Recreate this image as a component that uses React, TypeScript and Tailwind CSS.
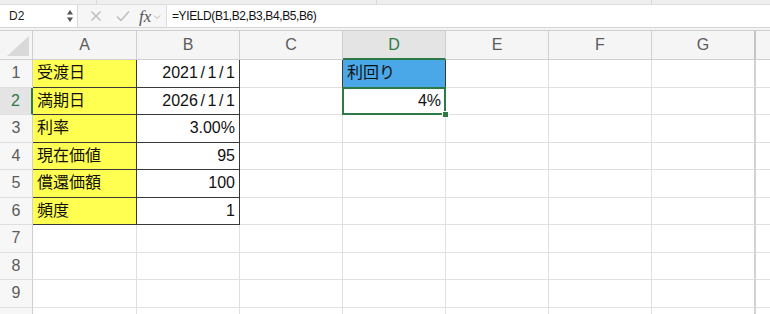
import React from "react";

const COLS = ["A", "B", "C", "D", "E", "F", "G", ""];
const WIDTHS = ["w-[104px]", "w-[103px]", "w-[103px]", "w-[103px]", "w-[103px]", "w-[103px]", "w-[104px]", "w-[40px]"];

type CellDef = { text?: React.ReactNode; cls?: string; align?: "left" | "right"; selected?: boolean };

const slash = <span className="mx-[2.6px]">/</span>;
const DARK = "border-r-[#3a3a3a] border-b-[#3a3a3a]";

const DATA: Record<number, Record<number, CellDef>> = {
  1: {
    0: { text: "受渡日", cls: `bg-[#ffff52] ${DARK}` },
    1: { text: <>2021{slash}1{slash}1</>, align: "right", cls: DARK },
    2: { cls: "border-r-[#3a3a3a] border-b-[#e0e0e0]" },
    3: { text: "利回り", cls: `bg-[#4aa7e8] ${DARK}` },
  },
  2: {
    0: { text: "満期日", cls: `bg-[#ffff52] ${DARK}` },
    1: { text: <>2026{slash}1{slash}1</>, align: "right", cls: DARK },
    3: { text: "4%", align: "right", selected: true },
  },
  3: {
    0: { text: "利率", cls: `bg-[#ffff52] ${DARK}` },
    1: { text: "3.00%", align: "right", cls: DARK },
  },
  4: {
    0: { text: "現在価値", cls: `bg-[#ffff52] ${DARK}` },
    1: { text: "95", align: "right", cls: DARK },
  },
  5: {
    0: { text: "償還価額", cls: `bg-[#ffff52] ${DARK}` },
    1: { text: "100", align: "right", cls: DARK },
  },
  6: {
    0: { text: "頻度", cls: `bg-[#ffff52] ${DARK}` },
    1: { text: "1", align: "right", cls: DARK },
  },
};

function FormulaBar() {
  return (
    <div className="flex h-[23px] bg-[#f6f6f6] border-b border-[#d6d6d6]">
      <div className="flex w-[78px] items-center justify-between bg-white border-r border-[#d9d9d9] pl-[9px] pr-[3px]">
        <span className="text-[12px] text-[#222]">D2</span>
        <svg width="8" height="16" viewBox="0 0 8 16">
          <polygon points="4,2 7,6.5 1,6.5" fill="#555" />
          <polygon points="1,9.5 7,9.5 4,14" fill="#555" />
        </svg>
      </div>
      <div className="flex w-[88px] items-center">
        <svg className="ml-[12px]" width="12" height="12" viewBox="0 0 12 12">
          <path d="M1.5 1.5 L10.5 10.5 M10.5 1.5 L1.5 10.5" stroke="#b9b9b9" strokeWidth="1.3" fill="none" />
        </svg>
        <svg className="ml-[14px]" width="14" height="12" viewBox="0 0 14 12">
          <path d="M1 6.5 L5 10.5 L13 1.5" stroke="#b9b9b9" strokeWidth="1.3" fill="none" />
        </svg>
        <span className="ml-[9px] font-['Liberation_Serif',serif] italic text-[17px] text-[#555] leading-none">fx</span>
        <svg className="ml-[2px] mt-[2px]" width="8" height="6" viewBox="0 0 8 6">
          <path d="M1 1.5 L4 4.5 L7 1.5" stroke="#b5b5b5" strokeWidth="1" fill="none" />
        </svg>
      </div>
      <div className="flex flex-1 items-center bg-white border-l border-[#dcdcdc] pl-[5px]">
        <span className="text-[12px] tracking-[-0.4px] text-[#111]">=YIELD(B1,B2,B3,B4,B5,B6)</span>
      </div>
    </div>
  );
}

function HeaderRow() {
  return (
    <div className="flex h-[30px] border-t border-[#cdcdcd]">
      <div className="relative w-[33px] shrink-0 bg-[#f5f5f5] border-r border-b border-[#cfcfcf]">
        <svg className="absolute right-[3px] bottom-[3px]" width="22" height="20" viewBox="0 0 22 20">
          <polygon points="22,0 22,20 0,20" fill="#d9d9d9" />
        </svg>
      </div>
      {COLS.map((c, i) => {
        const isD = c === "D";
        return (
          <div
            key={i}
            className={`${WIDTHS[i]} shrink-0 flex items-center justify-center text-[16px] ${
              isD
                ? "bg-[#e4e4e4] text-[#2e7a45] border-r border-b-2 border-b-[#2e7a45] border-r-[#cfcfcf]"
                : i === 6
                ? "bg-[#f5f5f5] text-[#5b5b5b] border-b border-r-2 border-b-[#cfcfcf] border-r-[#c4c4c4]"
                : "bg-[#f5f5f5] text-[#5b5b5b] border-r border-b border-[#cfcfcf]"
            }`}
          >
            {c}
          </div>
        );
      })}
    </div>
  );
}

function Row({ n, label }: { n: number; label: boolean }) {
  const rowData = DATA[n] || {};
  const sel = n === 2;
  return (
    <div className="flex h-[27.5px]">
      <div
        className={`w-[33px] shrink-0 flex items-center justify-center text-[16px] border-b border-b-[#dedede] ${
          sel
            ? "bg-[#e4e4e4] text-[#2e7a45] border-r-2 border-r-[#2e7a45]"
            : "bg-[#f7f7f7] text-[#5b5b5b] border-r border-r-[#cfcfcf]"
        }`}
      >
        {label ? n : null}
      </div>
      {COLS.map((_, i) => {
        const d = rowData[i];
        const borderCls = d?.cls
          ? d.cls
          : i === 6
          ? "border-r-[#d2d2d2] border-b-[#e0e0e0]"
          : "border-r-[#e0e0e0] border-b-[#e0e0e0]";
        return (
          <div
            key={i}
            className={`${WIDTHS[i]} shrink-0 relative flex items-center ${
              i === 6 ? "border-r-2" : "border-r"
            } border-b text-[16px] text-[#111] px-[4px] ${
              d?.align === "right" ? "justify-end" : "justify-start"
            } ${borderCls} ${d?.selected ? "z-10" : ""}`}
          >
            {d?.text !== undefined && <span className="whitespace-nowrap">{d.text}</span>}
            {d?.selected && (
              <>
                <div className="absolute left-[-1px] top-[-1px] right-[-1px] bottom-[-1px] border-2 border-[#2e7a45]" />
                <div className="absolute right-[-4px] bottom-[-4px] w-[7px] h-[7px] bg-[#2e7a45] border border-white" />
              </>
            )}
          </div>
        );
      })}
    </div>
  );
}

export default function App() {
  return (
    <div className="w-[770px] h-[314px] overflow-hidden bg-white font-['Liberation_Sans','Noto_Sans_CJK_JP',sans-serif]">
      <div className="flex h-[5px] bg-[#efefef] border-b border-[#dddddd]">
        <div className="w-[97px] border-r border-[#d8d8d8]" />
        <div className="w-[280px] border-r border-[#d8d8d8]" />
        <div className="w-[275px] border-r border-[#d8d8d8]" />
      </div>
      <FormulaBar />
      <div className="h-[2px] bg-[#f4f4f4]" />
      <HeaderRow />
      {[1, 2, 3, 4, 5, 6, 7, 8, 9, 10].map((n) => (
        <Row key={n} n={n} label={n <= 9} />
      ))}
    </div>
  );
}
